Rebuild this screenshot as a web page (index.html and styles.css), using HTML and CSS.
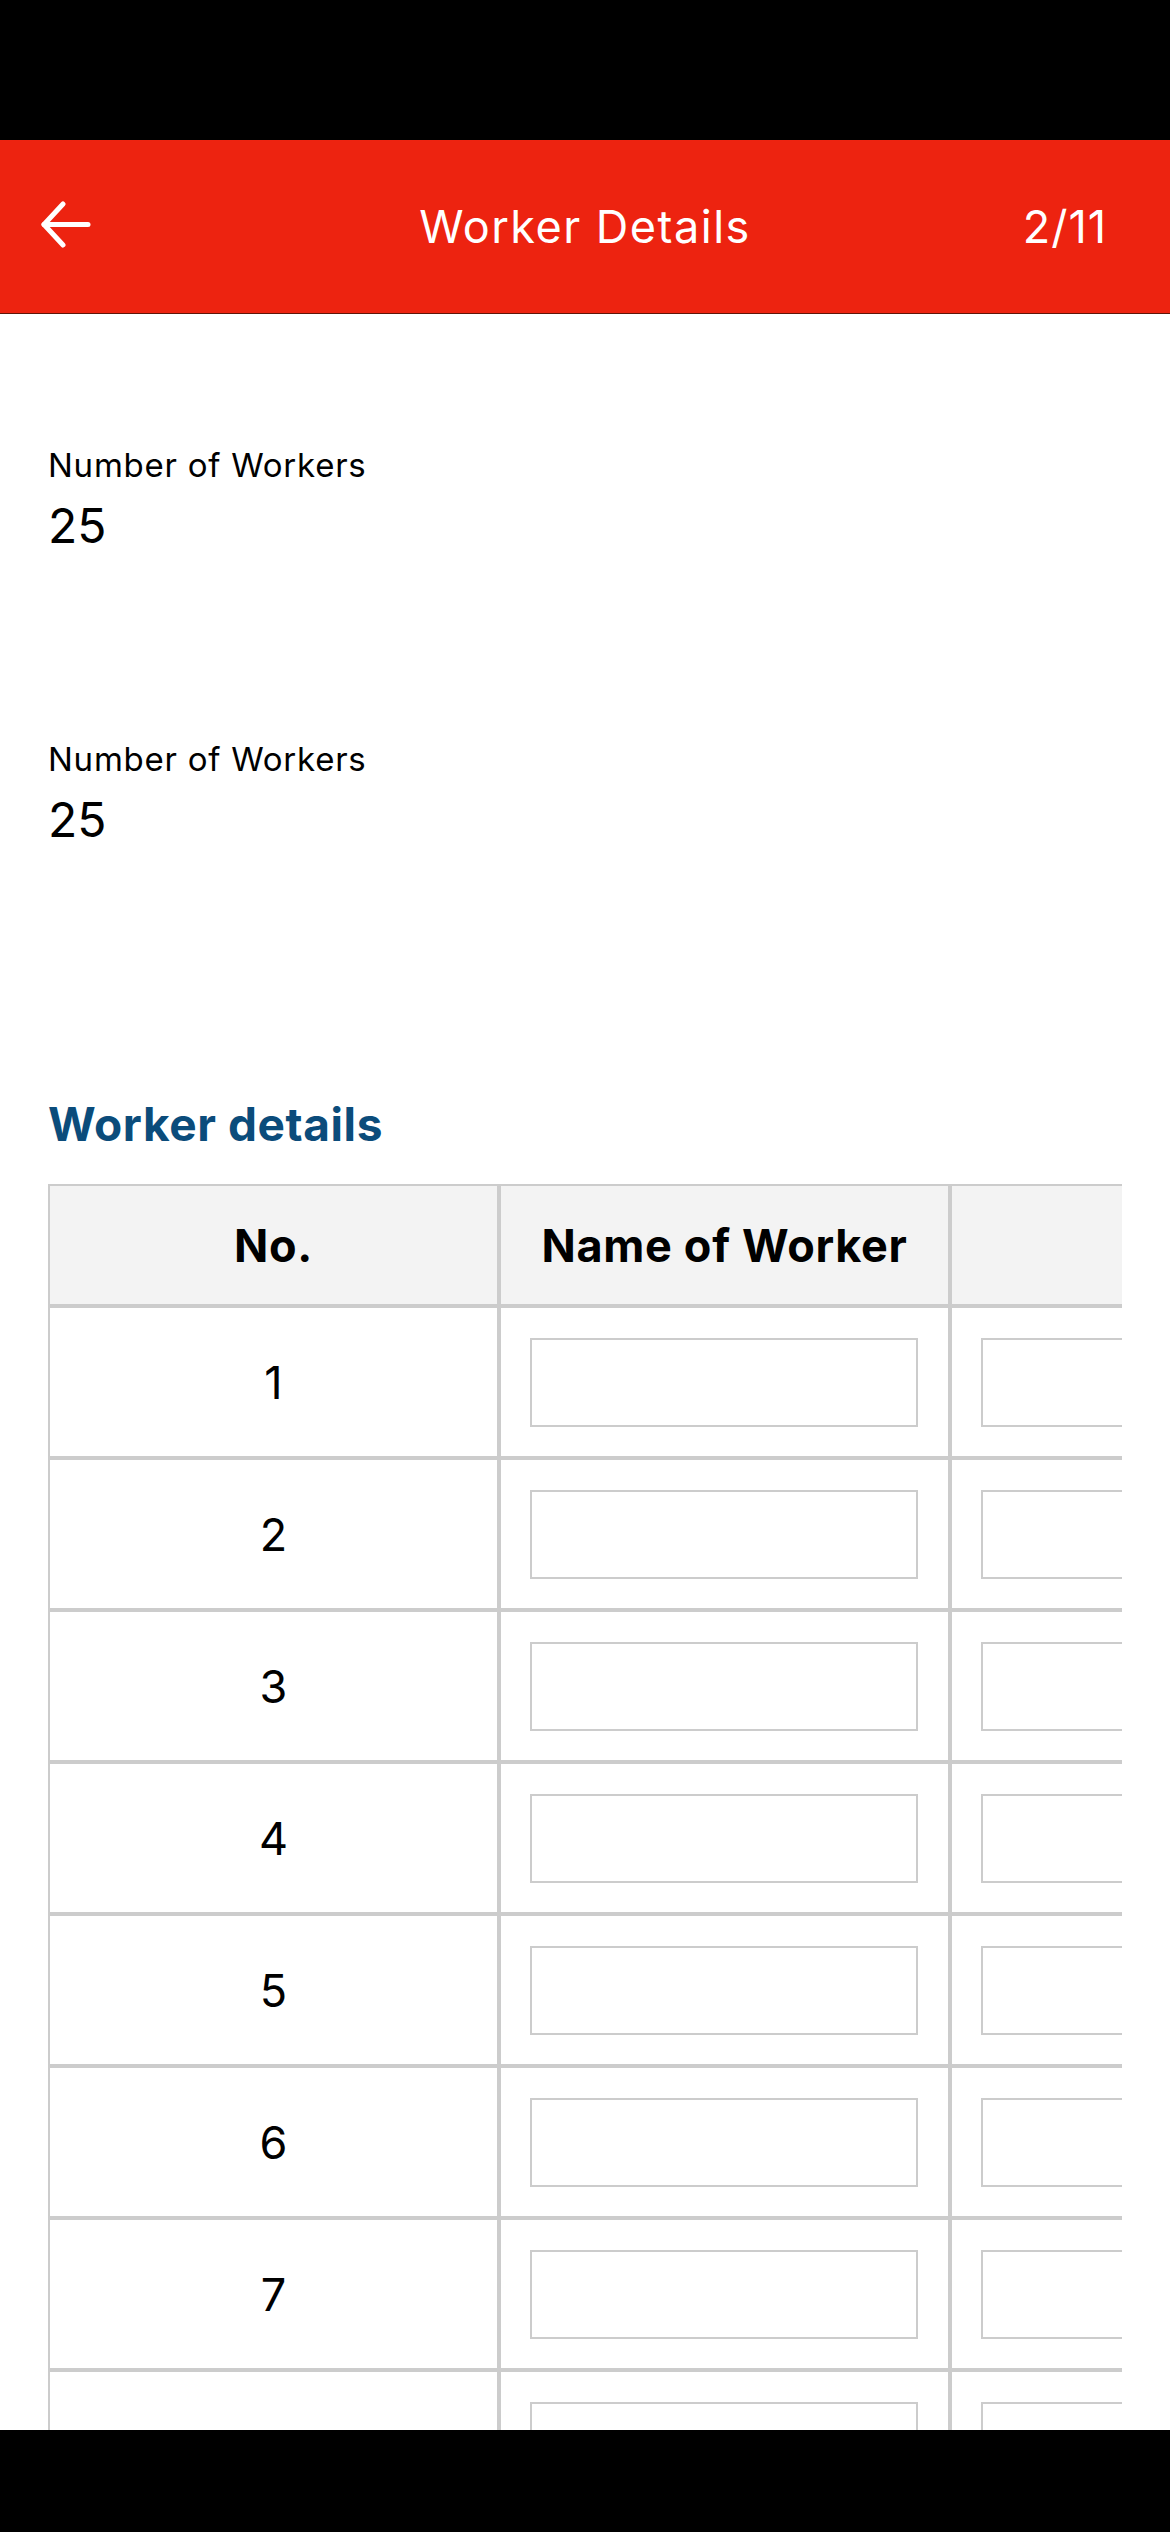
FILE: index.html
```html
<!DOCTYPE html>
<html lang="en">
<head>
  <meta charset="UTF-8">
  <title>Worker Details</title>
  <link rel="stylesheet" href="styles.css">
</head>
<body>
  <div class="screen">
    <div class="status-bar"></div>

    <!-- Top app bar -->
    <header class="app-bar">
      <button class="back-button" aria-label="Back">
        <svg width="52" height="52" viewBox="0 0 52 52" fill="none" stroke="#fff" stroke-width="5" stroke-linecap="round" stroke-linejoin="round">
          <path d="M4 23.5H48"/>
          <path d="M23 3L4 23.5L23 44"/>
        </svg>
      </button>
      <h1 class="app-title">Worker Details</h1>
      <div class="step-count">2/11</div>
    </header>

    <main class="content">
      <div class="field">
        <div class="field-label">Number of Workers</div>
        <div class="field-value">25</div>
      </div>

      <div class="field">
        <div class="field-label">Number of Workers</div>
        <div class="field-value">25</div>
      </div>

      <h2 class="section-title">Worker details</h2>

      <div class="table-wrap">
        <table class="worker-table">
          <colgroup>
            <col class="col-no">
            <col class="col-name">
            <col class="col-age">
          </colgroup>
          <thead>
            <tr>
              <th>No.</th>
              <th>Name of Worker</th>
              <th></th>
            </tr>
          </thead>
          <tbody id="workerRows"></tbody>
        </table>
      </div>
    </main>

    <div class="home-bar"></div>
  </div>

  <script>
    // Build the worker rows
    const rows = document.getElementById("workerRows");
    for (let i = 1; i <= 8; i++) {
      const tr = document.createElement("tr");
      tr.innerHTML = `<td class="cell-no">${i}</td>
        <td class="cell-input"><input type="text"></td>
        <td class="cell-input"><input type="text"></td>`;
      rows.appendChild(tr);
    }
  </script>
</body>
</html>
```

FILE: styles.css
```css
* {
  box-sizing: border-box;
}

body {
  margin: 0;
  font-family: 'Inter', 'Liberation Sans', sans-serif;
  color: #000;
  background: #000;
}

.screen {
  width: 1170px;
  height: 2532px;
  display: flex;
  flex-direction: column;
  background: #fff;
  overflow: hidden;
}

.status-bar {
  height: 140px;
  flex-shrink: 0;
  background: #000;
}

/* Red app bar */
.app-bar {
  height: 174px;
  flex-shrink: 0;
  display: grid;
  grid-template-columns: 1fr auto 1fr;
  align-items: center;
  padding: 0 40px;
  background: #ed2310;
  border-bottom: 1px solid #5e1509;
  color: #fff;
}

.back-button {
  justify-self: start;
  display: flex;
  padding: 0;
  background: none;
  border: none;
  cursor: pointer;
}

.app-title {
  margin: 0;
  font-size: 45px;
  font-weight: 400;
  line-height: 56px;
  letter-spacing: 1.5px;
}

.step-count {
  justify-self: end;
  margin-right: 23px;
  font-size: 45px;
  line-height: 56px;
  letter-spacing: 1px;
}

.content {
  flex: 1;
  min-height: 0;
  overflow: hidden;
  padding: 131px 48px 0;
}

/* Read-only fields */
.field + .field {
  margin-top: 184px;
}

.field-label {
  font-size: 33px;
  line-height: 40px;
  letter-spacing: 0.75px;
}

.field-value {
  margin-top: 12px;
  font-size: 48px;
  line-height: 58px;
}

.section-title {
  margin: 247px 0 32px;
  font-size: 46px;
  font-weight: 700;
  line-height: 56px;
  letter-spacing: 0.6px;
  color: #0b4c7b;
}

/* Scrolling table */
.table-wrap {
  overflow: hidden;
}

.worker-table {
  border-collapse: separate;
  border-spacing: 0;
  table-layout: fixed;
  width: 1402px;
}

.col-no,
.col-name {
  width: 451px;
}

.col-age {
  width: 500px;
}

.worker-table th,
.worker-table td {
  border: 2px solid #cccccc;
  padding: 0;
}

.worker-table th {
  height: 122px;
  background: #f3f3f3;
  font-size: 45px;
  font-weight: 700;
  letter-spacing: 0.7px;
  text-align: center;
}

.worker-table td {
  height: 152px;
}

.cell-no {
  font-size: 45px;
  text-align: center;
}

.cell-input {
  padding: 0 29px !important;
}

.cell-input input {
  display: block;
  width: 388px;
  height: 89px;
  margin: 0;
  border: 2px solid #cccccc;
  border-radius: 0;
  background: #fff;
  font: inherit;
}

.home-bar {
  height: 102px;
  flex-shrink: 0;
  background: #000;
}
```
